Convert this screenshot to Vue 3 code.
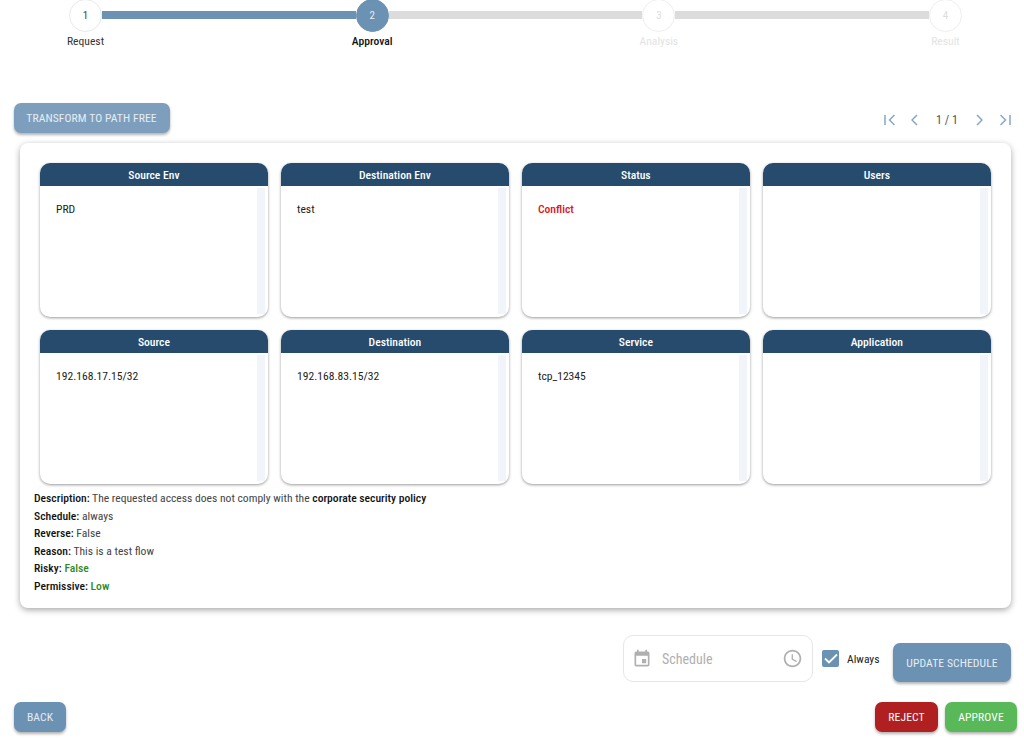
<script setup>
const steps = [
  { n: 1, label: 'Request', state: 'done' },
  { n: 2, label: 'Approval', state: 'active' },
  { n: 3, label: 'Analysis', state: 'todo' },
  { n: 4, label: 'Result', state: 'todo' }
]
const cells = [
  { title: 'Source Env', value: 'PRD' },
  { title: 'Destination Env', value: 'test' },
  { title: 'Status', value: 'Conflict', cls: 'red' },
  { title: 'Users', value: '' },
  { title: 'Source', value: '192.168.17.15/32' },
  { title: 'Destination', value: '192.168.83.15/32' },
  { title: 'Service', value: 'tcp_12345' },
  { title: 'Application', value: '' }
]
</script>

<template>
  <div class="page">
    <div class="stepper">
      <template v-for="(s, i) in steps" :key="s.n">
        <div class="step" :class="s.state">
          <div class="circle">{{ s.n }}</div>
          <div class="label">{{ s.label }}</div>
        </div>
        <div v-if="i < 3" class="line" :class="{ filled: i === 0 }"></div>
      </template>
    </div>

    <div class="toolbar">
      <button class="btn transform">TRANSFORM TO PATH FREE</button>
      <div class="pager">
        <svg width="11" height="12" viewBox="0 0 11 12"><path d="M1 1v10M10.500 1 5.500 6l5 5" /></svg>
        <svg class="p2" width="7" height="12" viewBox="0 0 7 12"><path d="M6 1 1 6l5 5" /></svg>
        <span class="count">1 / 1</span>
        <svg class="p3" width="7" height="12" viewBox="0 0 7 12"><path d="M1 1l5 5-5 5" /></svg>
        <svg class="p4" width="11" height="12" viewBox="0 0 11 12"><path d="M10 1v10M.5 1l5 5-5 5" /></svg>
      </div>
    </div>

    <section class="card">
      <div class="grid">
        <div v-for="c in cells" :key="c.title" class="cell">
          <div class="head">{{ c.title }}</div>
          <div class="body">
            <div class="value" :class="c.cls">{{ c.value }}</div>
            <div class="track"></div>
          </div>
        </div>
      </div>
      <div class="details">
        <div><b>Description:</b> The requested access does not comply with the <b>corporate security policy</b></div>
        <div><b>Schedule:</b> always</div>
        <div><b>Reverse:</b> False</div>
        <div><b>Reason:</b> This is a test flow</div>
        <div><b>Risky:</b> <span class="green">False</span></div>
        <div><b>Permissive:</b> <span class="green">Low</span></div>
      </div>
    </section>

    <div class="schedule-row">
      <div class="input">
        <svg class="cal" width="20" height="20" viewBox="0 0 24 24"><path d="M19 3h-1V1h-2v2H8V1H6v2H5a2 2 0 0 0-2 2v14a2 2 0 0 0 2 2h14a2 2 0 0 0 2-2V5a2 2 0 0 0-2-2zm0 16H5V8h14v11zm-7-7h5v5h-5z"/></svg>
        <span class="ph">Schedule</span>
        <svg class="clock" width="21" height="21" viewBox="0 0 24 24"><path d="M11.990 2C6.470 2 2 6.480 2 12s4.470 10 9.990 10C17.520 22 22 17.520 22 12S17.520 2 11.990 2zM12 20c-4.420 0-8-3.580-8-8s3.580-8 8-8 8 3.580 8 8-3.580 8-8 8zm.5-13H11v6l5.250 3.150.75-1.230-4.500-2.670z"/></svg>
      </div>
      <div class="check">
        <svg width="14" height="11" viewBox="0 0 14 11"><path d="M1 5.500l4 4L13 1.500" /></svg>
      </div>
      <span class="always">Always</span>
      <button class="btn update">UPDATE SCHEDULE</button>
    </div>

    <div class="actions">
      <button class="btn back">BACK</button>
      <div class="right">
        <button class="btn reject">REJECT</button>
        <button class="btn approve">APPROVE</button>
      </div>
    </div>
  </div>
</template>

<style scoped>
.page {
  width: 1024px;
  height: 740px;
  overflow: hidden;
  font-family: Roboto, "Liberation Sans", sans-serif;
  font-stretch: 87%;
  font-size: 11.600px;
  color: #222;
  background: #fff;
  box-sizing: border-box;
}
.stepper {
  display: flex;
  align-items: flex-start;
  margin: -1px 62px 0 69px;
}
.step {
  width: 33px;
  flex: none;
  display: flex;
  flex-direction: column;
  align-items: center;
}
.circle {
  width: 33px;
  height: 33px;
  box-sizing: border-box;
  border-radius: 50%;
  border: 1px solid #e8e8e8;
  background: #fff;
  display: flex;
  align-items: center;
  justify-content: center;
  font-size: 11px;
  color: #444;
}
.label {
  margin-top: 2px;
  white-space: nowrap;
  line-height: 14px;
  color: #333;
}
.active .circle {
  background: #6b91b3;
  border-color: #6b91b3;
  color: #e8eef4;
}
.active .label { color: #111; font-weight: 500; }
.todo .circle { color: #ddd; border-color: #eee; }
.todo .label { color: #e3e3e3; }
.line {
  flex: 1;
  height: 8px;
  margin-top: 12px;
  background: #dcdcdc;
}
.line.filled { background: #6b91b3; }

.toolbar {
  display: flex;
  justify-content: space-between;
  align-items: center;
  margin: 55px 13px 0 13.500px;
}
.btn {
  border: 0;
  font-family: inherit;
  font-stretch: inherit;
  font-size: 11.600px;
  color: #fff;
  letter-spacing: .1px;
  border-radius: 7px;
  box-shadow: 0 2px 3px rgba(0, 0, 0, .3);
  padding: 0;
  white-space: nowrap;
}
.transform {
  width: 156px;
  height: 30px;
  background: #7d9fbd;
  color: #e6edf3;
}
.pager {
  display: flex;
  align-items: center;
  color: #555;
  margin-top: 4px;
}
.pager svg { fill: none; stroke: #86a8c6; stroke-width: 1.500; }
.p2 { margin-left: 16px; }
.count { width: 22px; margin-left: 18px; text-align: center; font-size: 12px; white-space: nowrap; color: #555; }
.p3 { margin-left: 18px; }
.p4 { margin-left: 17px; }

.card {
  margin: 10px 13px 0 20px;
  height: 465px;
  box-sizing: border-box;
  border-radius: 8px;
  background: #fff;
  box-shadow: 0 2px 6px rgba(0, 0, 0, .35);
  padding: 20px 20px 0 14px;
}
.grid {
  display: grid;
  grid-template-columns: repeat(4, 227.800px);
  grid-template-rows: 154px 154px;
  column-gap: 13.200px;
  row-gap: 13px;
  margin-left: 6px;
}
.cell {
  border-radius: 10px;
  background: #fff;
  box-shadow: 0 1px 3px rgba(0, 0, 0, .4);
  overflow: hidden;
  display: flex;
  flex-direction: column;
}
.head {
  height: 23px;
  flex: none;
  background: #274b6d;
  color: #fff;
  font-weight: 500;
  text-align: center;
  line-height: 24px;
}
.body {
  flex: 1;
  display: flex;
  justify-content: space-between;
  padding: 2px 3px 3px 16px;
  min-height: 0;
}
.value { padding-top: 14px; line-height: 14px; }
.value.red { color: #e01010; font-weight: 500; }
.track { width: 8px; background: #f1f4f9; }
.details {
  margin-top: 6px;
  line-height: 17.600px;
  color: #444;
}
.details b { color: #111; font-weight: 500; }
.green { color: #2e8b1f; font-weight: 500; }

.schedule-row {
  display: flex;
  align-items: flex-start;
  margin: 27px 13px 0 623px;
}
.input {
  width: 190px;
  height: 47px;
  box-sizing: border-box;
  border: 1px solid #e6e6e6;
  border-radius: 10px;
  display: flex;
  align-items: center;
  padding: 0 9px;
  flex: none;
}
.cal { fill: #b0b0b0; flex: none; margin-left: -1px; }
.clock { fill: #b0b0b0; flex: none; }
.ph { margin-left: 10px; font-size: 14px; color: #b0b0b0; flex: 1; }
.check {
  width: 17px;
  height: 17px;
  margin: 15px 0 0 9px;
  border-radius: 2px;
  background: #6b91b3;
  display: flex;
  align-items: center;
  justify-content: center;
  flex: none;
}
.check svg { fill: none; stroke: #fff; stroke-width: 1.800; }
.always { margin: 17px 0 0 8px; line-height: 14px; color: #222; }
.update {
  margin: 8px 0 0 auto;
  width: 118px;
  height: 39px;
  background: #6b91b3;
  color: #e6edf3;
  flex: none;
}
.actions {
  display: flex;
  justify-content: space-between;
  align-items: flex-start;
  margin: 20px 7px 0 14px;
}
.right { display: flex; gap: 7px; }
.back { width: 52px; height: 30px; background: #6b91b3; color: #e6edf3; }
.reject { width: 63px; height: 30px; background: #b02020; }
.approve { width: 72px; height: 30px; background: #59b858; }
</style>
